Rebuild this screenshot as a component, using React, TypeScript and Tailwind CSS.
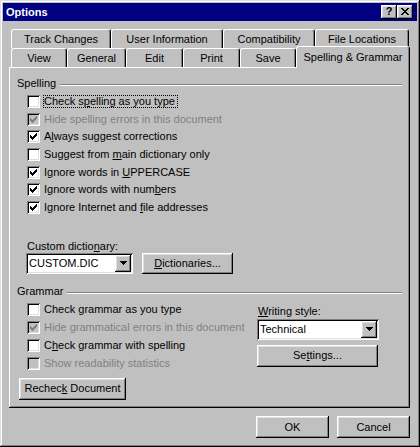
import React from "react";

const raised =
  "shadow-[inset_-1px_-1px_#000,inset_1px_1px_#fff,inset_-2px_-2px_#808080,inset_2px_2px_#dfdfdf]";
const sunken =
  "shadow-[inset_1px_1px_#808080,inset_-1px_-1px_#fff,inset_2px_2px_#000,inset_-2px_-2px_#dfdfdf]";

const checkStarts = [2, 3, 4, 3, 2, 1, 0];

function Check({ checked, disabled }: { checked?: boolean; disabled?: boolean }) {
  return (
    <span
      className={`relative block w-[13px] h-[13px] shrink-0 ${disabled ? "bg-[#c0c0c0]" : "bg-white"} ${sunken}`}
    >
      {checked && (
        <svg className="absolute left-0 top-0" width="13" height="13" shapeRendering="crispEdges">
          {checkStarts.map((s, c) => (
            <rect key={c} x={3 + c} y={3 + s} width={1} height={3} fill={disabled ? "#808080" : "#000"} />
          ))}
        </svg>
      )}
    </span>
  );
}

function Row({
  checked,
  disabled,
  focus,
  h,
  children,
}: {
  checked?: boolean;
  disabled?: boolean;
  focus?: boolean;
  h: string;
  children: React.ReactNode;
}) {
  return (
    <div className={`flex items-start ${h}`}>
      <Check checked={checked} disabled={disabled} />
      <span
        className={`ml-[3px] px-[1px] whitespace-nowrap ${disabled ? "text-[#808080]" : ""} ${focus ? "outline-1 outline-dotted outline-black -outline-offset-1 pr-[3px]" : ""}`}
      >
        {children}
      </span>
    </div>
  );
}

function Arrow() {
  return (
    <svg width="7" height="4" shapeRendering="crispEdges">
      <rect x="0" y="0" width="7" height="1" fill="#000" />
      <rect x="1" y="1" width="5" height="1" fill="#000" />
      <rect x="2" y="2" width="3" height="1" fill="#000" />
      <rect x="3" y="3" width="1" height="1" fill="#000" />
    </svg>
  );
}

function Combo({ w, text }: { w: string; text: string }) {
  return (
    <div className={`${w} h-[21px] bg-white ${sunken} p-[2px] flex`}>
      <span className="flex-1 pl-[1px] self-center whitespace-nowrap">{text}</span>
      <span className={`w-[16px] h-[17px] bg-[#c0c0c0] ${raised} flex items-center justify-center`}>
        <Arrow />
      </span>
    </div>
  );
}

function Btn({ className, children }: { className: string; children: React.ReactNode }) {
  return (
    <div className={`${className} bg-[#c0c0c0] ${raised} flex items-center justify-center whitespace-nowrap`}>
      {children}
    </div>
  );
}

function Tab({ className, children }: { className: string; children: React.ReactNode }) {
  return (
    <div
      className={`${className} h-[19px] bg-[#c0c0c0] border-t border-l border-r border-t-white border-l-white border-r-black rounded-t-[3px] shadow-[inset_-1px_0_#808080] flex justify-center pt-[3px] whitespace-nowrap`}
    >
      {children}
    </div>
  );
}

function CloseGlyph() {
  const rows = [0, 1, 2, 3, 4, 5, 6];
  return (
    <svg width="8" height="7" shapeRendering="crispEdges">
      {rows.map((r) => (
        <React.Fragment key={r}>
          <rect x={r} y={r} width={2} height={1} fill="#000" />
          <rect x={6 - r} y={r} width={2} height={1} fill="#000" />
        </React.Fragment>
      ))}
    </svg>
  );
}

function GroupHeader({ label }: { label: string }) {
  return (
    <div className="flex items-start ml-[8px] mr-[8px]">
      <span>{label}</span>
      <div className="flex-1 ml-[4px] mt-[7px] h-[2px] border-t border-b border-t-[#808080] border-b-white" />
    </div>
  );
}

export default function App() {
  return (
    <div
      className={`w-[420px] h-[447px] bg-[#c0c0c0] p-[3px] flex flex-col font-['Liberation_Sans',Arial,sans-serif] text-[11px] leading-[13px] text-black shadow-[inset_-1px_-1px_#000,inset_1px_1px_#dfdfdf,inset_-2px_-2px_#808080,inset_2px_2px_#fff]`}
    >
      {/* Title bar */}
      <div className="h-[18px] bg-[#000080] flex items-center pl-[3px] pr-[4px]">
        <span className="flex-1 text-white font-bold">Options</span>
        <div className="flex">
          <div className={`w-[16px] h-[14px] bg-[#c0c0c0] ${raised} flex items-center justify-center font-bold text-[11px] leading-[11px] pb-[1px]`}>
            ?
          </div>
          <div className={`w-[16px] h-[14px] bg-[#c0c0c0] ${raised} flex items-center justify-center pb-[1px]`}>
            <CloseGlyph />
          </div>
        </div>
      </div>

      {/* Tabs */}
      <div className="flex pl-[8px] mt-[8px]">
        <Tab className="w-[100px]">Track Changes</Tab>
        <Tab className="w-[112px]">User Information</Tab>
        <Tab className="w-[92px]">Compatibility</Tab>
        <Tab className="w-[94px]">File Locations</Tab>
      </div>
      <div className="flex items-start pl-[8px] h-[19px]">
        <Tab className="w-[56px]">View</Tab>
        <Tab className="w-[59px]">General</Tab>
        <Tab className="w-[57px]">Edit</Tab>
        <Tab className="w-[57px]">Print</Tab>
        <Tab className="w-[56px]">Save</Tab>
        <div className="relative z-10 w-[114px] h-[22px] -mt-[2px] bg-[#c0c0c0] border-t border-l border-r border-t-white border-l-white border-r-black rounded-t-[3px] shadow-[inset_-1px_0_#808080] flex justify-center pt-[4px] whitespace-nowrap">
          Spelling &amp; Grammar
        </div>
      </div>

      {/* Panel */}
      <div
        className={`ml-[6px] w-[401px] h-[341px] flex flex-col shadow-[inset_-1px_-1px_#000,inset_1px_1px_#fff,inset_-2px_-2px_#808080]`}
      >
        <div className="mt-[10px]">
          <GroupHeader label="Spelling" />
        </div>
        <div className="mt-[5px] ml-[18px] flex flex-col">
          <Row h="h-[17.67px]" focus>
            Check s<u>p</u>elling as you type
          </Row>
          <Row h="h-[17.67px]" checked disabled>
            Hide spelling errors in this document
          </Row>
          <Row h="h-[17.67px]" checked>
            A<u>l</u>ways suggest corrections
          </Row>
          <Row h="h-[17.67px]">
            Suggest from <u>m</u>ain dictionary only
          </Row>
          <Row h="h-[17.67px]" checked>
            Ignore words in <u>U</u>PPERCASE
          </Row>
          <Row h="h-[17.67px]" checked>
            Ignore words with num<u>b</u>ers
          </Row>
          <Row h="h-[17.67px]" checked>
            Ignore Internet and <u>f</u>ile addresses
          </Row>
        </div>
        <div className="mt-[21px] ml-[18px]">
          Custom dictio<u>n</u>ary:
        </div>
        <div className="flex items-start ml-[17px]">
          <Combo w="w-[107px]" text="CUSTOM.DIC" />
          <Btn className="ml-[9px] w-[91px] h-[21px]">
            <span>
              <u>D</u>ictionaries...
            </span>
          </Btn>
        </div>

        <div className="mt-[11px]">
          <GroupHeader label="Grammar" />
        </div>
        <div className="mt-[5px] flex items-start">
          <div className="ml-[18px] w-[230px] flex flex-col">
            <Row h="h-[18px]">
              Check <u>g</u>rammar as you type
            </Row>
            <Row h="h-[18px]" checked disabled>
              Hide grammatical errors in this document
            </Row>
            <Row h="h-[18px]">
              C<u>h</u>eck grammar with spelling
            </Row>
            <Row h="h-[18px]" disabled>
              Show readability statistics
            </Row>
          </div>
          <div className="flex flex-col">
            <div className="mt-[2px] ml-[1px]">
              <u>W</u>riting style:
            </div>
            <div className="mt-[1px]">
              <Combo w="w-[122px]" text="Technical" />
            </div>
            <Btn className="mt-[5px] w-[121px] h-[22px]">
              <span>
                Se<u>t</u>tings...
              </span>
            </Btn>
          </div>
        </div>
        <Btn className="mt-[3px] ml-[10px] w-[107px] h-[22px]">
          <span>
            Rechec<u>k</u> Document
          </span>
        </Btn>
      </div>

      {/* Bottom buttons */}
      <div className="flex justify-end mt-[8px] pr-[7px] gap-[8px]">
        <Btn className="w-[73px] h-[22px]">OK</Btn>
        <Btn className="w-[73px] h-[22px]">Cancel</Btn>
      </div>
    </div>
  );
}
